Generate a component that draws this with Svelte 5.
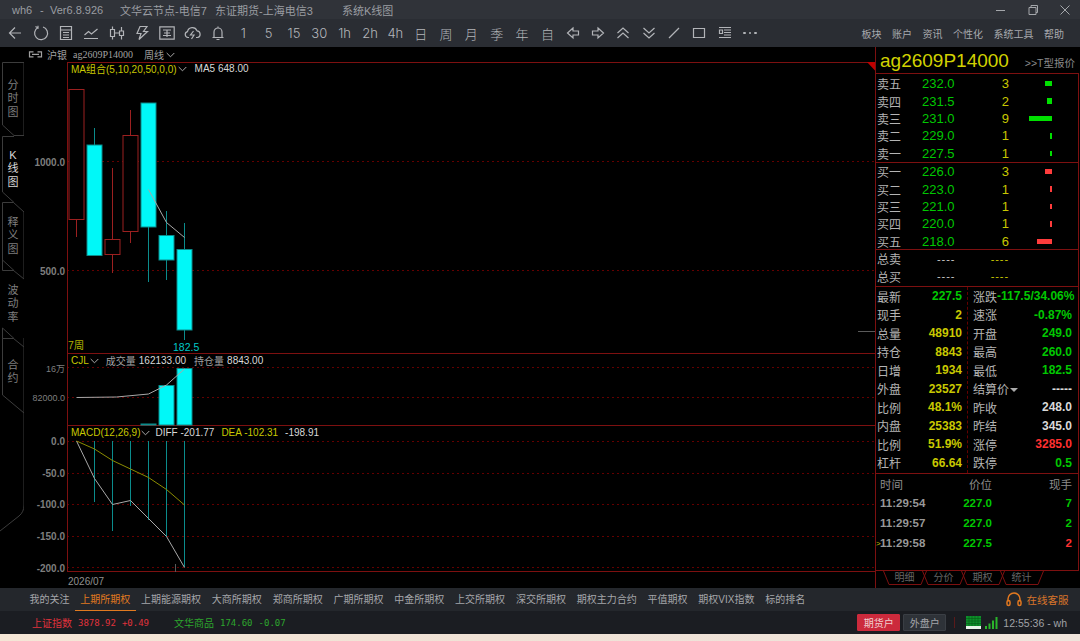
<script lang="ts">
	const titleItems = [
		{ text: 'wh6', w: 28 },
		{ text: '-', w: 10 },
		{ text: 'Ver6.8.926', w: 70 },
		{ text: '文华云节点-电信7', w: 95 },
		{ text: '东证期货-上海电信3', w: 127 },
		{ text: '系统K线图', w: 60 }
	];
	const periods = ['1', '5', '15', '30', '1h', '2h', '4h', '日', '周', '月', '季', '年', '自'];
	const menus = ['板块', '账户', '资讯', '个性化', '系统工具', '帮助'];
	const sideTabs = [
		{ text: ['分', '时', '图'], h: 74 },
		{ text: ['K', '线', '图'], h: 66, active: true },
		{ text: ['释', '义', '图'], h: 68 },
		{ text: ['波', '动', '率'], h: 68 },
		{ text: ['合', '约'], h: 68 }
	];

	// chart coordinates are page pixels, the svg viewBox shifts them into the chart column
	const candles = [
		{ x: 76.5, top: 89.5, bottom: 219.5, hi: 89.5, lo: 237, up: true },
		{ x: 94.5, top: 145, bottom: 255.5, hi: 128, lo: 255.5 },
		{ x: 112.5, top: 239.5, bottom: 254.5, hi: 168, lo: 273, up: true },
		{ x: 130.5, top: 135.5, bottom: 231.5, hi: 110, lo: 243, up: true },
		{ x: 148.5, top: 103, bottom: 227, hi: 103, lo: 282 },
		{ x: 166.5, top: 235.5, bottom: 260, hi: 211, lo: 280 },
		{ x: 184.5, top: 249.5, bottom: 330, hi: 223, lo: 340 }
	];
	const volBars = [
		{ x: 148.5, top: 424 },
		{ x: 166.5, top: 385.5 },
		{ x: 184.5, top: 368.5 }
	];
	const macdBars = [
		{ x: 94.5, to: 502 },
		{ x: 112.5, to: 531 },
		{ x: 130.5, to: 506 },
		{ x: 148.5, to: 520 },
		{ x: 166.5, to: 537 },
		{ x: 184.5, to: 567 }
	];
	const gridY = [161.5, 270.5, 367.5, 397.5, 441.5, 473.5, 504.5, 536.5, 567.5];
	const axisLabels = [
		{ y: 165.5, t: '1000.0' },
		{ y: 274.5, t: '500.0' },
		{ y: 371.5, t: '16万', thin: true },
		{ y: 400.5, t: '82000.0', thin: true },
		{ y: 445, t: '0.0' },
		{ y: 476.5, t: '-50.0' },
		{ y: 508, t: '-100.0' },
		{ y: 540, t: '-150.0' },
		{ y: 571.5, t: '-200.0' }
	];

	const sells = [
		{ label: '卖五', price: '232.0', qty: 3, bar: 7 },
		{ label: '卖四', price: '231.5', qty: 2, bar: 5 },
		{ label: '卖三', price: '231.0', qty: 9, bar: 23 },
		{ label: '卖二', price: '229.0', qty: 1, bar: 2 },
		{ label: '卖一', price: '227.5', qty: 1, bar: 2 }
	];
	const buys = [
		{ label: '买一', price: '226.0', qty: 3, bar: 7.5 },
		{ label: '买二', price: '223.0', qty: 1, bar: 2.5 },
		{ label: '买三', price: '221.0', qty: 1, bar: 2.5 },
		{ label: '买四', price: '220.0', qty: 1, bar: 2.5 },
		{ label: '买五', price: '218.0', qty: 6, bar: 15.5 }
	];
	const stats = [
		['最新', '227.5', 'g', '涨跌', '-117.5/34.06%', 'g'],
		['现手', '2', 'y', '速涨', '-0.87%', 'g'],
		['总量', '48910', 'y', '开盘', '249.0', 'g'],
		['持仓', '8843', 'y', '最高', '260.0', 'g'],
		['日增', '1934', 'y', '最低', '182.5', 'g'],
		['外盘', '23527', 'y', '结算价', '-----', 'w'],
		['比例', '48.1%', 'y', '昨收', '248.0', 'w'],
		['内盘', '25383', 'y', '昨结', '345.0', 'w'],
		['比例', '51.9%', 'y', '涨停', '3285.0', 'r'],
		['杠杆', '66.64', 'y', '跌停', '0.5', 'g']
	];
	const ticks = [
		{ time: '11:29:54', price: '227.0', qty: 7, cls: 'g' },
		{ time: '11:29:57', price: '227.0', qty: 2, cls: 'g' },
		{ time: '11:29:58', price: '227.5', qty: 2, cls: 'r', mark: true }
	];
	const detailTabs = ['明细', '分价', '期权', '统计'];
	const exchanges = [
		'我的关注', '上期所期权', '上期能源期权', '大商所期权', '郑商所期权', '广期所期权',
		'中金所期权', '上交所期权', '深交所期权', '期权主力合约', '平值期权', '期权VIX指数', '标的排名'
	];
</script>

{#snippet chevron()}
	<svg class="chev" width="9" height="6" viewBox="0 0 9 6"><path d="M.7 1 4.500 4.800 8.300 1" /></svg>
{/snippet}

<div class="screen">
	<header class="titlebar">
		{#each titleItems as item}
			<span style="width:{item.w}px">{item.text}</span>
		{/each}
		<div class="winctl">
			<svg width="12" height="12" viewBox="0 0 12 12"><path d="M1 6.500h9" /></svg>
			<svg width="12" height="12" viewBox="0 0 12 12"><path d="M2 3.500h7v7H2zM4 3.500v-2h6.500v7H9" /></svg>
			<svg width="12" height="12" viewBox="0 0 12 12"><path d="M1.500 1.500l9 9M10.500 1.500l-9 9" /></svg>
		</div>
	</header>

	<nav class="toolbar">
		<span class="tool"><svg width="16" height="16" viewBox="0 0 16 16"><path d="M14 8H2.500M8 2.500 2.500 8 8 13.500" /></svg></span>
		<span class="tool"><svg width="16" height="16" viewBox="0 0 16 16"><path d="M5 2.500A6.500 6.500 0 1 0 10 2M2.500 1.500 5 3 5 .8" /></svg></span>
		<span class="tool"><svg width="16" height="16" viewBox="0 0 16 16"><path d="M2.500 1.500h11v13h-11zM2.500 5h11M5 7.500h6M5 10h6M5 12.500h6" /></svg></span>
		<span class="tool"><svg width="16" height="16" viewBox="0 0 16 16"><path d="M1 13.500h14M1.500 10l4-3.500 3 2.500 6-5" /></svg></span>
		<span class="tool"><svg width="16" height="16" viewBox="0 0 16 16"><path d="M1.500 4.500h4v7h-4zM3.500 1.500v3M3.500 11.500v3M10.500 6h4v4.500h-4zM12.500 2v4M12.500 10.500v4M6 8h4" /></svg></span>
		<span class="tool"><svg width="16" height="16" viewBox="0 0 16 16"><path d="M6 1.500h7L9.500 6.500h4L5 14.500l2-6H3z" /></svg></span>
		<span class="tool"><svg width="16" height="16" viewBox="0 0 16 16"><path d="M.8 1.800h14.400v12.400H.8zM4 5h8M8 5v7M5 8h6M4 10.500h8" /></svg></span>
		<span class="tool"><svg width="17" height="16" viewBox="0 0 17 16"><path d="M5 12.500H4A3 3 0 0 1 3.500 6.600 5 5 0 0 1 13 5.800 3.400 3.400 0 0 1 13.500 12.500H12M9.500 6 6.500 10h3.500l-2.500 4" /></svg></span>
		<span class="tool"><svg width="16" height="16" viewBox="0 0 16 16"><path d="M2.500 12.500h11M4 12.500V7a4 4 0 0 1 8 0v5.500M8 3V1.500M6.500 14.500h3" /></svg></span>
		{#each periods as p}
			<span class="tool period">{p}</span>
		{/each}
		<span class="tool"><svg width="16" height="16" viewBox="0 0 16 16"><path d="M8 3 2.500 8 8 13v-3h5.500V6H8z" /></svg></span>
		<span class="tool"><svg width="16" height="16" viewBox="0 0 16 16"><path d="M8 3l5.500 5L8 13v-3H2.500V6H8z" /></svg></span>
		<span class="tool"><svg width="16" height="16" viewBox="0 0 16 16"><path d="M2.500 8 8 3l5.500 5M2.500 13 8 8l5.500 5" /></svg></span>
		<span class="tool"><svg width="16" height="16" viewBox="0 0 16 16"><path d="M2.500 3 8 8l5.500-5M2.500 8 8 13l5.500-5" /></svg></span>
		<span class="tool"><svg width="16" height="16" viewBox="0 0 16 16"><path d="M3 13 13 3" /></svg></span>
		<span class="tool"><svg width="16" height="16" viewBox="0 0 16 16"><path d="M2.500 3.500h11v9h-11z" /></svg></span>
		<span class="tool"><svg width="16" height="16" viewBox="0 0 16 16"><path d="M2 2.500h12M7 5h7M7 7.500h7M7 10h7M2 12.500h12M2.500 5h3v3.500h-3z" /></svg></span>
		<span class="tool dots"><i></i><i></i><i></i></span>
		<div class="menus">
			{#each menus as m}
				<span>{m}</span>
			{/each}
		</div>
	</nav>

	<main class="workspace">
		<aside class="sidetabs">
			<svg class="sideline" width="24" height="541" viewBox="0 47 24 541">
				<path d="M24 135.500H14L2.500 125V62.500H24V135.500M14 136.500H2.500V192L14 202.500M2.500 202.500H13.500L24 212V270M14 270.500H2.500V260L14 270.500M24 270V279L13.500 270.500M13.500 338.500H2.500V328L14 338.500M24 338V347L13.500 338.500H2.500V395L24 413M24 347V505Q24 512 19 516L0 531M2.500 202.500V260" />
			</svg>
			{#each sideTabs as tab}
				<div class="sidetab" class:active={tab.active} style="height:{tab.h}px">
					{#each tab.text as ch}
						<span>{ch}</span>
					{/each}
				</div>
			{/each}
		</aside>

		<section class="chartcol">
			<div class="inforow">
				<svg class="link" width="15" height="7" viewBox="0 0 15 7"><path d="M5.500.8h-4v5h4M9.500.8h4v5h-4M4 3.300h7" /></svg>
				<span class="name">沪银</span>
				<span class="code">ag2609P14000</span>
				<span class="period-name">周线</span>
				{@render chevron()}
			</div>

			<svg class="plot" width="851" height="525" viewBox="24 62 851 525">
				{#each gridY as y}
					<line class="grid" x1="67" x2="875" y1={y} y2={y} />
				{/each}
				<path class="frame" d="M67.500 62V571.500M67 62.500H875M67 353.500H875M67 425.500H875M67 571.500H875" />
				<polygon points="867,62 875.500,62 875.500,71" fill="#c00000" />
				<path class="tickmark" d="M858 331.500H875M175.500 564V572" />

				{#each candles as c}
					{#if c.up}
						<line class="up" x1={c.x} x2={c.x} y1={c.hi} y2={c.lo} />
						<rect class="up" x={c.x - 7.5} y={c.top} width="15" height={c.bottom - c.top} fill="#000" />
					{:else}
						<line class="down" x1={c.x} x2={c.x} y1={c.hi} y2={c.lo} />
						<rect class="down" x={c.x - 7.5} y={c.top} width="15" height={c.bottom - c.top} fill="#00f8f8" />
					{/if}
				{/each}
				<polyline class="ma" points="148.500,189.500 166.500,222.500 184.500,237.500" />
				<text class="lowlabel" x="173" y="351">182.5</text>
				<text class="weeks" x="68" y="349">7周</text>

				{#each volBars as b}
					<rect class="down" x={b.x - 7.5} y={b.top} width="15" height={425 - b.top} fill="#00f8f8" />
				{/each}
				<polyline class="ma" points="76.500,397.500 116.500,397 148.500,394 166.500,385 184.500,369" />

				{#each macdBars as b}
					<line class="down" x1={b.x} x2={b.x} y1="441" y2={b.to} />
				{/each}
				<polyline class="ma" points="76.500,441 94.500,478.500 112.500,504.500 130.500,500.500 148.500,518.500 166.500,536.500 184.500,567.500" />
				<polyline class="dea" points="76.500,441 94.500,449 112.500,460.500 130.500,469 148.500,477.500 166.500,489.500 184.500,505" />

				{#each axisLabels as a}
					<text class="axis" class:thin={a.thin} x="65" y={a.y} text-anchor="end">{a.t}</text>
				{/each}
				<text class="date" x="68" y="584.500">2026/07</text>
			</svg>

			<div class="panehead ma-head">
				<span class="yl">MA组合(5,10,20,50,0,0)</span>
				{@render chevron()}
				<span class="wt push">MA5 648.00</span>
			</div>
			<div class="panehead vol-head">
				<span class="yl">CJL</span>
				{@render chevron()}
				<span class="gy small-push">成交量</span><span class="wt tight">162133.00</span>
				<span class="gy next">持仓量</span><span class="wt tight">8843.00</span>
			</div>
			<div class="panehead macd-head">
				<span class="yl">MACD(12,26,9)</span>
				{@render chevron()}
				<span class="wt">DIFF -201.77</span>
				<span class="yl gap">DEA -102.31</span>
				<span class="wt gap">-198.91</span>
			</div>
		</section>

		<aside class="quote">
			<div class="quotehead">
				<span class="symbol">ag2609P14000</span>
				<span class="tquote">&gt;&gt;T型报价</span>
			</div>
			<div class="book">
				<div class="section sell">
					{#each sells as r}
						<div class="bookrow">
							<span class="lb">{r.label}</span><span class="pr">{r.price}</span><span class="qt">{r.qty}</span>
							<span class="barcell"><i class="green" style="width:{r.bar}px"></i></span>
						</div>
					{/each}
				</div>
				<div class="section buy">
					{#each buys as r}
						<div class="bookrow">
							<span class="lb">{r.label}</span><span class="pr">{r.price}</span><span class="qt">{r.qty}</span>
							<span class="barcell"><i class="red" style="width:{r.bar}px"></i></span>
						</div>
					{/each}
				</div>
				<div class="section totals">
					<div class="bookrow"><span class="lb">总卖</span><span class="dash w">----</span><span class="dash y">----</span></div>
					<div class="bookrow"><span class="lb">总买</span><span class="dash w">----</span><span class="dash y">----</span></div>
				</div>
				<div class="section stats">
					{#each stats as s}
						<div class="statrow">
							<span class="lb">{s[0]}</span><b class={s[2]}>{s[1]}</b>
							<span class="lb rlabel">{s[3]}{#if s[3] === '结算价'}<i class="caret"></i>{/if}</span><b class={s[5]}>{s[4]}</b>
						</div>
					{/each}
				</div>
				<div class="details">
					<div class="tickhead"><span>时间</span><span class="mid">价位</span><span class="end">现手</span></div>
					{#each ticks as t}
						<div class="tickrow">
							{#if t.mark}<i class="mark">&gt;</i>{/if}
							<b class="time">{t.time}</b><b class="g mid">{t.price}</b><b class="{t.cls} end">{t.qty}</b>
						</div>
					{/each}
				</div>
			</div>
			<div class="detailtabs">
				{#each detailTabs as tab}
					<div class="dtab">
						<svg width="44" height="14" viewBox="0 0 44 14"><path d="M.5 0 6 13.500H38L43.500 0" /></svg>
						<span>{tab}</span>
					</div>
				{/each}
			</div>
		</aside>
	</main>

	<div class="exchbar">
		<div class="exchlist">
			{#each exchanges as ex, i}
				<span class:current={i === 1}>{ex}</span>
			{/each}
		</div>
		<div class="service">
			<svg width="16" height="15" viewBox="0 0 16 15"><path d="M2 9.500V7a6 6 0 0 1 12 0v2.500" /><rect x="1" y="8.500" width="3" height="5" rx="1.500" /><rect x="12" y="8.500" width="3" height="5" rx="1.500" /></svg>
			<span>在线客服</span>
		</div>
	</div>

	<footer class="statusbar">
		<span class="idx red first">上证指数</span><span class="num red n1">3878.92</span><span class="num red n2">+0.49</span>
		<span class="idx green second">文华商品</span><span class="num green n1">174.60</span><span class="num green n2">-0.07</span>
		<div class="statusright">
			<button class="acct on">期货户</button>
			<button class="acct">外盘户</button>
			<i class="sep"></i>
			<svg class="meter" width="15" height="13" viewBox="0 0 15 13"><rect width="15" height="13" fill="#e8f4e8" /><rect x="0" y="0" width="15" height="10" fill="#0d8f2a" /><path d="M0 2.500h15M0 5h15M0 7.500h15M3 0v10M6 0v10M9 0v10M12 0v10" stroke="#075a18" stroke-width=".6" /></svg>
			<svg class="signal" width="13" height="12" viewBox="0 0 13 12"><path d="M0 9h2v3H0zM3.500 6.500h2V12h-2zM7 3.500h2V12H7zM10.500 0h2v12h-2z" fill="#2bb52b" /></svg>
			<span class="clock">12:55:36 - wh</span>
		</div>
	</footer>
	<div class="desktop"></div>
</div>

<style>
	:global(body) {
		margin: 0;
		background: #000;
	}

	.screen {
		position: relative;
		display: flex;
		flex-direction: column;
		width: 1080px;
		height: 641px;
		overflow: hidden;
		font-family: 'Liberation Sans', 'Noto Sans CJK SC', sans-serif;
		background: #000;
	}

	.titlebar {
		display: flex;
		align-items: center;
		flex: none;
		height: 19px;
		padding-left: 12px;
		background: #303339;
		color: #9a9da2;
		font-size: 11px;
		white-space: nowrap;
	}

	.winctl {
		display: flex;
		gap: 20px;
		margin-left: auto;
		padding-right: 9px;
	}

	.winctl svg {
		fill: none;
		stroke: #a4a7ab;
	}

	.toolbar {
		display: flex;
		align-items: center;
		flex: none;
		height: 28px;
		padding-left: 2.500px;
		background: #2a2d33;
		color: #a2a4a8;
	}

	.tool {
		display: flex;
		align-items: center;
		justify-content: center;
		flex: none;
		width: 25.350px;
		height: 28px;
	}

	.tool svg {
		fill: none;
		stroke: #b2b4b8;
		stroke-width: 1.200;
	}

	.period {
		font-family: Inter, 'Noto Sans CJK SC', sans-serif;
		font-size: 13px;
		font-weight: 300;
		color: #b4b6ba;
	}

	.dots {
		gap: 3px;
	}

	.dots i {
		width: 2.500px;
		height: 2.500px;
		border-radius: 50%;
		background: #b2b4b8;
	}

	.menus {
		display: flex;
		gap: 10.500px;
		margin-left: auto;
		padding-right: 16px;
		font-size: 10px;
		color: #a8aaae;
	}

	.workspace {
		display: flex;
		flex: none;
		height: 541px;
		background: #000;
	}

	.sidetabs {
		position: relative;
		display: flex;
		flex-direction: column;
		flex: none;
		width: 24px;
		padding-top: 15px;
		box-sizing: border-box;
	}

	.sideline {
		position: absolute;
		top: 0;
		left: 0;
		fill: none;
		stroke: #3c3c3c;
	}

	.sidetab {
		position: relative;
		display: flex;
		flex-direction: column;
		align-items: center;
		justify-content: center;
		flex: none;
		padding-left: 2px;
		font-size: 11px;
		line-height: 13.500px;
		color: #7e7e7e;
	}

	.sidetab.active {
		color: #d8d8d8;
	}

	.chartcol {
		position: relative;
		flex: none;
		width: 851px;
	}

	.inforow {
		display: flex;
		align-items: center;
		height: 15px;
		padding-left: 4px;
		color: #a0a0a0;
		font-size: 10px;
	}

	.link {
		fill: none;
		stroke: #a0a0a0;
		stroke-width: 1.200;
	}

	.name {
		margin-left: 4px;
	}

	.code {
		margin-left: 6px;
		font-family: 'Liberation Serif', serif;
	}

	.period-name {
		margin: 0 2px 0 11px;
	}

	.chev {
		flex: none;
		fill: none;
		stroke: #a8a8a8;
	}

	.plot {
		display: block;
	}

	.grid {
		stroke: #640000;
		stroke-dasharray: 2 3;
	}

	.frame {
		fill: none;
		stroke: #7d1010;
	}

	.tickmark {
		fill: none;
		stroke: #5a5a5a;
	}

	.up {
		stroke: #9c2020;
	}

	.down {
		stroke: #0b8c8c;
	}

	.ma {
		fill: none;
		stroke: #a8a8a8;
	}

	.dea {
		fill: none;
		stroke: #8c8c00;
	}

	.axis {
		fill: #7e7e7e;
		font-size: 10px;
		font-weight: 700;
	}

	.axis.thin {
		font-size: 9px;
		font-weight: 400;
	}

	.date {
		fill: #909090;
		font-size: 10px;
	}

	.lowlabel {
		fill: #00c8c8;
		font-size: 10.500px;
	}

	.weeks {
		fill: #b0b000;
		font-size: 10.500px;
	}

	.panehead {
		position: absolute;
		left: 47px;
		display: flex;
		align-items: center;
		height: 14px;
		font-size: 10px;
		white-space: nowrap;
	}

	.ma-head {
		top: 14px;
	}

	.vol-head {
		top: 306px;
	}

	.macd-head {
		top: 378px;
	}

	.panehead .chev {
		margin: 2px 5px 0 1px;
	}

	.yl {
		color: #c8c800;
	}

	.wt {
		color: #d8d8d8;
	}

	.gy {
		color: #a0a0a0;
	}

	.push {
		margin-left: 3px;
	}

	.small-push {
		margin-left: 2px;
	}

	.tight {
		margin-left: 3px;
	}

	.next {
		margin-left: 8px;
	}

	.gap {
		margin-left: 7px;
	}

	.quote {
		display: flex;
		flex-direction: column;
		flex: none;
		width: 205px;
		box-sizing: border-box;
		border-left: 1px solid #7d1010;
	}

	.quotehead {
		display: flex;
		align-items: baseline;
		justify-content: space-between;
		height: 26px;
		padding: 0 5px 0 4px;
		box-sizing: border-box;
	}

	.symbol {
		font-size: 19px;
		line-height: 27px;
		color: #d2d200;
	}

	.tquote {
		font-size: 10.500px;
		color: #8a8a8a;
	}

	.book {
		width: 203px;
		height: 498px;
		box-sizing: border-box;
		border: 1px solid #7d1010;
		border-left: 0;
	}

	.section {
		box-sizing: border-box;
		border-bottom: 1px solid #7d1010;
	}

	.sell {
		height: 89px;
		padding-top: 1px;
	}

	.buy {
		height: 87px;
	}

	.totals {
		height: 37px;
	}

	.stats {
		position: relative;
		height: 187px;
	}

	.stats::after {
		content: '';
		position: absolute;
		top: 0;
		bottom: 0;
		left: 91px;
		border-left: 1px dashed #640000;
	}

	.bookrow {
		display: grid;
		grid-template-columns: 45px 44px 43px 43px;
		align-items: center;
		height: 17.400px;
		padding-left: 1px;
		font-size: 13px;
	}

	.lb {
		font-size: 12px;
		color: #b4b4b4;
	}

	.pr {
		color: #00c800;
	}

	.qt {
		text-align: right;
		color: #c8c800;
	}

	.barcell {
		display: flex;
		justify-content: flex-end;
	}

	.barcell i {
		display: block;
		height: 5.500px;
	}

	.green {
		background: #00e000;
	}

	.red {
		background: #ff3c3c;
	}

	.dash {
		letter-spacing: 0.900px;
		font-size: 11px;
	}

	.dash.w {
		color: #c8c8c8;
		margin-left: 15px;
	}

	.dash.y {
		color: #c8c800;
		text-align: right;
		grid-column: 3;
	}

	.statrow {
		display: grid;
		grid-template-columns: 40px 45px 1fr auto;
		align-items: center;
		height: 18.500px;
		padding: 0 6px 0 1px;
		font-size: 12px;
	}

	.statrow b {
		text-align: right;
	}

	.rlabel {
		display: flex;
		align-items: center;
		padding-left: 11px;
		white-space: nowrap;
	}

	.caret {
		width: 0;
		height: 0;
		margin: 2px 0 0 1px;
		border: 4px solid transparent;
		border-top: 4px solid #aaa;
		border-bottom: 0;
	}

	b.g,
	.tickrow .g {
		color: #00c800;
	}

	b.y {
		color: #c8c800;
	}

	b.w {
		color: #d8d8d8;
	}

	b.r {
		color: #ff3030;
	}

	.details {
		padding: 1px 6px 0 1px;
	}

	.tickhead,
	.tickrow {
		position: relative;
		display: grid;
		grid-template-columns: 80px 32px 1fr;
		align-items: center;
		padding-left: 3px;
		font-size: 11.500px;
	}

	.tickhead {
		height: 18px;
		color: #8c8c8c;
	}

	.tickrow {
		height: 20.200px;
	}

	.time {
		color: #989898;
	}

	.mid {
		justify-self: end;
	}

	.end {
		justify-self: end;
	}

	.mark {
		position: absolute;
		left: -1px;
		font-style: normal;
		font-size: 8px;
		color: #c8c800;
	}

	.detailtabs {
		display: flex;
		padding-left: 7px;
	}

	.dtab {
		position: relative;
		flex: none;
		width: 39px;
		height: 14px;
		font-size: 10px;
		color: #666;
		text-align: center;
		line-height: 13px;
	}

	.dtab svg {
		position: absolute;
		top: 0;
		left: 0;
		fill: none;
		stroke: #7d1010;
	}

	.dtab span {
		position: relative;
		margin-left: 4px;
	}

	.exchbar {
		display: flex;
		align-items: center;
		justify-content: space-between;
		flex: none;
		height: 23px;
		padding: 0 11.500px 0 24px;
		box-sizing: border-box;
		background: #24272c;
		color: #a4a6aa;
		font-size: 10px;
	}

	.exchlist {
		display: flex;
		height: 23px;
	}

	.exchlist span {
		display: flex;
		align-items: center;
		box-sizing: border-box;
		padding: 0 5.420px 1px;
		border-bottom: 1px solid transparent;
	}

	.exchlist .current {
		color: #e07a20;
		border-bottom-color: #e07a20;
	}

	.service {
		display: flex;
		align-items: center;
		gap: 5px;
		color: #d9752a;
		font-size: 10.500px;
	}

	.service svg {
		fill: none;
		stroke: #e2781f;
		stroke-width: 1.500;
	}

	.statusbar {
		display: flex;
		align-items: center;
		flex: none;
		height: 23px;
		padding-left: 32px;
		background: #1b1d22;
		font-size: 10px;
	}

	.idx.red,
	.num.red {
		background: none;
		color: #e0323c;
	}

	.idx.green,
	.num.green {
		background: none;
		color: #2da52d;
	}

	.num {
		font-family: 'DejaVu Sans Mono', monospace;
		font-size: 9px;
	}

	.n1 {
		margin-left: 6px;
	}

	.n2 {
		margin-left: 6px;
	}

	.second {
		margin-left: 25px;
	}

	.statusright {
		display: flex;
		align-items: center;
		margin-left: auto;
		padding-right: 13px;
		color: #a0a2a6;
	}

	.acct {
		width: 43px;
		height: 17px;
		margin-right: 3px;
		padding: 0;
		border: 1px solid #3a3e44;
		border-radius: 1px;
		background: #2e3238;
		color: #a4a6aa;
		font: 10px 'Liberation Sans', 'Noto Sans CJK SC', sans-serif;
	}

	.acct.on {
		border-color: #cc2a3c;
		background: #cc2a3c;
		color: #f0d0d0;
	}

	.sep {
		width: 1px;
		height: 11px;
		margin: 0 11px 0 5px;
		background: #5a1a1a;
	}

	.signal {
		margin: 0 5px 0 4px;
	}

	.clock {
		font-size: 10.500px;
	}

	.desktop {
		flex: 1;
		background: linear-gradient(90deg, #f5e6d6, #f0e2d6 45%, #efe4dc);
	}
</style>
